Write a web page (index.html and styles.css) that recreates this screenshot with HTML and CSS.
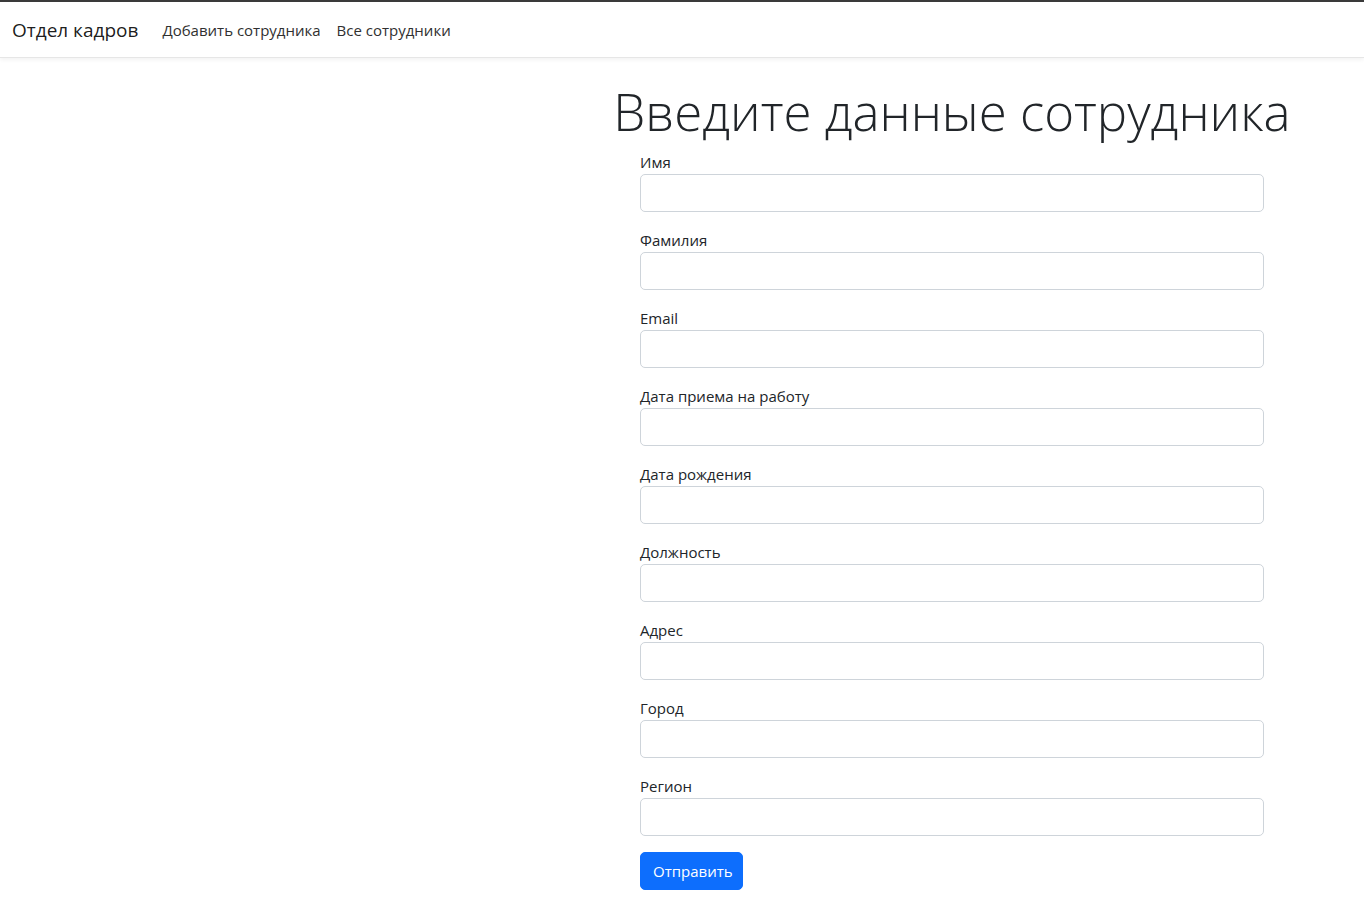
FILE: index.html
```
<!DOCTYPE html>
<html lang="ru">
<head>
<meta charset="utf-8">
<title>Отдел кадров</title>
<link rel="stylesheet" href="styles.css">
</head>
<body>
<nav class="navbar">
  <a class="brand" href="#">Отдел кадров</a>
  <a class="nav-link" href="#">Добавить сотрудника</a>
  <a class="nav-link" href="#">Все сотрудники</a>
</nav>
<main class="page">
  <div class="panel">
    <h1 class="title">Введите данные сотрудника</h1>
    <form class="form">
      <div class="group"><label class="label">Имя</label><input class="control" type="text"></div>
      <div class="group"><label class="label">Фамилия</label><input class="control" type="text"></div>
      <div class="group"><label class="label">Email</label><input class="control" type="text"></div>
      <div class="group"><label class="label">Дата приема на работу</label><input class="control" type="text"></div>
      <div class="group"><label class="label">Дата рождения</label><input class="control" type="text"></div>
      <div class="group"><label class="label">Должность</label><input class="control" type="text"></div>
      <div class="group"><label class="label">Адрес</label><input class="control" type="text"></div>
      <div class="group"><label class="label">Город</label><input class="control" type="text"></div>
      <div class="group"><label class="label">Регион</label><input class="control" type="text"></div>
      <button class="btn" type="button">Отправить</button>
    </form>
  </div>
</main>
</body>
</html>
```
FILE: styles.css
```
* { box-sizing: border-box; }
html, body { margin: 0; padding: 0; background: #fff; }
body {
  font-family: "Open Sans", "Noto Sans", sans-serif;
  font-size: 16px;
  line-height: 24px;
  color: #212529;
}
.navbar {
  display: flex;
  align-items: center;
  height: 58px;
  padding: 0 12px;
  border-top: 2px solid #3a3a3a;
  border-bottom: 1px solid #e6e6e6;
  box-shadow: 0 2px 4px rgba(0,0,0,0.05);
  background: #fff;
}
.brand {
  font-size: 19px;
  color: rgba(0,0,0,0.9);
  text-decoration: none;
  margin-right: 16px;
}
.nav-link {
  font-size: 15px;
  color: #303030;
  text-decoration: none;
  padding: 0 8px;
}
.page {
  display: flex;
  justify-content: flex-end;
  padding-right: 100px;
}
.panel {
  width: 624px;
}
.title {
  margin: 18px -60px 4px;
  font-size: 51px;
  font-weight: 300;
  line-height: 70px;
  text-align: center;
  white-space: nowrap;
  color: #212529;
}
.form { display: flex; flex-direction: column; }
.group { margin-bottom: 16px; display: flex; flex-direction: column; }
.label { font-size: 15px; line-height: 24px; }
.control {
  height: 38px;
  border: 1px solid #ced4da;
  border-radius: 5px;
  background: #fff;
  font: inherit;
  padding: 6px 12px;
}
.btn {
  align-self: flex-start;
  height: 38px;
  padding: 0 12px;
  width: 103px;
  border: 1px solid #0d6efd;
  border-radius: 5px;
  background: #0d6efd;
  color: #fff;
  font-family: inherit;
  font-size: 15px;
  cursor: pointer;
}
```
